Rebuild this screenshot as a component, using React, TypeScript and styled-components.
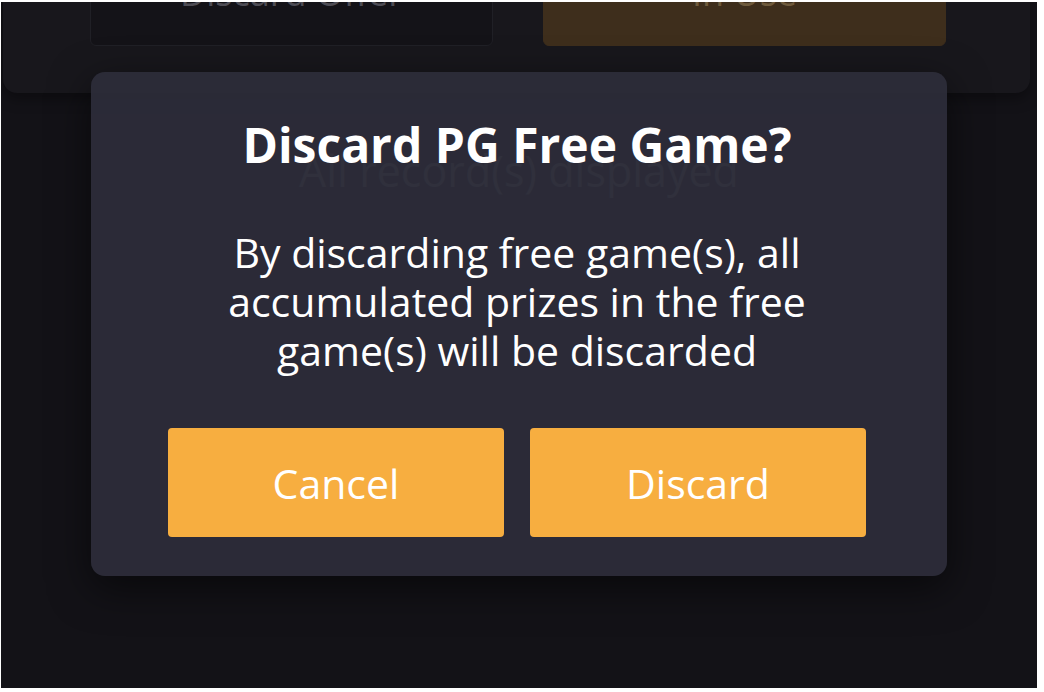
import React from "react";
import styled, { createGlobalStyle } from "styled-components";

const GlobalStyle = createGlobalStyle`
  html, body, #root {
    height: 100%;
  }
  body {
    margin: 0;
    padding: 2px 7px 4px 1px;
    box-sizing: border-box;
    background: #ffffff;
    font-family: "Open Sans", "Noto Sans", "Liberation Sans", sans-serif;
  }
`;

const Page = styled.div`
  position: relative;
  height: 100%;
  overflow: hidden;
  background: #131217;
`;

const OfferCard = styled.div`
  margin: -60px 7px 0 2px;
  padding: 0 84px 47px 87px;
  background: #18171c;
  border-radius: 0 0 14px 14px;
  box-shadow: 0 6px 14px rgba(0, 0, 0, 0.35);
  display: flex;
  gap: 50px;
`;

const OfferButton = styled.div<{ $primary?: boolean }>`
  flex: 1;
  height: 104px;
  padding-bottom: 4px;
  border-radius: 6px;
  display: flex;
  align-items: center;
  justify-content: center;
  font-size: 36px;
  box-sizing: border-box;
  background: ${(p) => (p.$primary ? "#3e2e1c" : "#141318")};
  border: 1px solid ${(p) => (p.$primary ? "#3e2e1c" : "#202026")};
  color: ${(p) => (p.$primary ? "#6e5a3c" : "#4d4c54")};
`;

const RecordsNote = styled.p`
  margin: 48px 0 0;
  text-align: center;
  font-size: 43px;
  line-height: 59px;
  color: #74747f;
`;

const Overlay = styled.div`
  position: absolute;
  inset: 0;
  display: flex;
  justify-content: center;
  align-items: flex-start;
  padding-top: 70px;
`;

const Modal = styled.div`
  width: 856px;
  box-sizing: border-box;
  padding: 39px 81px 39px 77px;
  background: rgba(44, 44, 57, 0.95);
  border-radius: 14px;
  box-shadow: 0 12px 40px rgba(0, 0, 0, 0.55);
  display: flex;
  flex-direction: column;
  align-items: center;
  color: #ffffff;
`;

const Title = styled.h2`
  margin: 0;
  font-size: 48px;
  font-weight: 700;
  line-height: 67px;
`;

const Message = styled.p`
  margin: 50px 0 0;
  font-size: 41px;
  line-height: 49px;
  text-align: center;
  max-width: 620px;
`;

const Actions = styled.div`
  margin-top: 53px;
  width: 100%;
  display: flex;
  gap: 26px;
`;

const ActionButton = styled.button`
  flex: 1;
  height: 109px;
  border: none;
  border-radius: 4px;
  background: #f7ae40;
  color: #ffffff;
  font-family: inherit;
  font-size: 41px;
  cursor: pointer;
`;

export default function App() {
  return (
    <>
      <GlobalStyle />
      <Page>
        <OfferCard>
          <OfferButton>Discard Offer</OfferButton>
          <OfferButton $primary>In Use</OfferButton>
        </OfferCard>
        <RecordsNote>All record(s) displayed</RecordsNote>
        <Overlay>
          <Modal>
            <Title>Discard PG Free Game?</Title>
            <Message>
              By discarding free game(s), all accumulated prizes in the free
              game(s) will be discarded
            </Message>
            <Actions>
              <ActionButton>Cancel</ActionButton>
              <ActionButton>Discard</ActionButton>
            </Actions>
          </Modal>
        </Overlay>
      </Page>
    </>
  );
}
